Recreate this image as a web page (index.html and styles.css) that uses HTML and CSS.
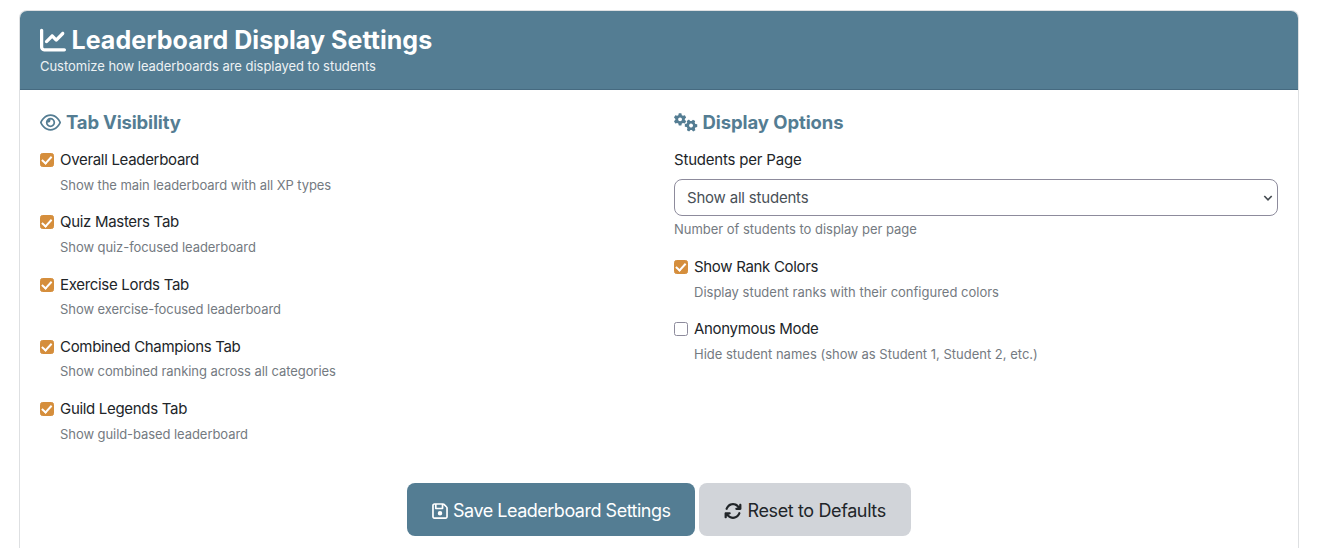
FILE: index.html
```html
<!DOCTYPE html>
<html lang="en">
<head>
<meta charset="utf-8">
<title>Leaderboard Display Settings</title>
<link rel="stylesheet" href="styles.css">
</head>
<body>
<section class="card">
  <header class="card-header">
    <h1 class="title"><svg class="icon-chart" viewBox="0 0 512 512"><path d="M64 64c0-17.7-14.3-32-32-32S0 46.3 0 64V400c0 44.2 35.8 80 80 80H480c17.7 0 32-14.3 32-32s-14.3-32-32-32H80c-8.8 0-16-7.2-16-16V64zm406.6 86.6c12.5-12.5 12.5-32.8 0-45.3s-32.8-12.5-45.3 0L320 210.7l-57.4-57.4c-12.5-12.5-32.8-12.5-45.3 0l-112 112c-12.5 12.5-12.5 32.8 0 45.3s32.8 12.5 45.3 0L240 221.3l57.4 57.4c12.5 12.5 32.8 12.5 45.3 0l128-128z"/></svg><span>Leaderboard Display Settings</span></h1>
    <p class="subtitle">Customize how leaderboards are displayed to students</p>
  </header>
  <div class="card-body">
    <div class="columns">
      <div class="column">
        <h2 class="heading heading-tabs"><svg class="icon-eye" viewBox="0 0 576 512"><path fill-rule="evenodd" d="M288 80c-65.2 0-118.8 29.6-159.9 67.7C89.6 183.5 63 226 49.4 256c13.6 30 40.2 72.5 78.6 108.3C169.2 402.4 222.8 432 288 432s118.8-29.6 159.9-67.7C486.4 328.5 513 286 526.6 256c-13.6-30-40.2-72.5-78.6-108.3C406.8 109.6 353.2 80 288 80zM95.4 112.6C142.5 68.8 207.2 32 288 32s145.5 36.8 192.6 80.6c46.8 43.5 78.1 95.4 93 131.1c3.3 7.9 3.3 16.7 0 24.6c-14.9 35.7-46.2 87.7-93 131.1C433.5 443.2 368.8 480 288 480s-145.5-36.8-192.6-80.6C48.6 356 17.3 304 2.5 268.3c-3.3-7.9-3.3-16.7 0-24.6C17.3 208 48.6 156 95.4 112.6zM288 336c44.2 0 80-35.8 80-80s-35.8-80-80-80c-.7 0-1.3 0-2 0c1.3 5.1 2 10.5 2 16c0 35.3-28.7 64-64 64c-5.5 0-10.9-.7-16-2c0 .7 0 1.3 0 2c0 44.2 35.8 80 80 80zm0-208a128 128 0 1 1 0 256 128 128 0 1 1 0-256z"/></svg><span>Tab Visibility</span></h2>
        <div class="option"><label class="check"><input type="checkbox" class="box" checked><span>Overall Leaderboard</span></label><p class="help">Show the main leaderboard with all XP types</p></div>
        <div class="option"><label class="check"><input type="checkbox" class="box" checked><span>Quiz Masters Tab</span></label><p class="help">Show quiz-focused leaderboard</p></div>
        <div class="option"><label class="check"><input type="checkbox" class="box" checked><span>Exercise Lords Tab</span></label><p class="help">Show exercise-focused leaderboard</p></div>
        <div class="option"><label class="check"><input type="checkbox" class="box" checked><span>Combined Champions Tab</span></label><p class="help">Show combined ranking across all categories</p></div>
        <div class="option"><label class="check"><input type="checkbox" class="box" checked><span>Guild Legends Tab</span></label><p class="help">Show guild-based leaderboard</p></div>
      </div>
      <div class="column">
        <h2 class="heading heading-gears"><svg class="icon-gears" viewBox="0 0 24 19"><defs><path id="gear" fill-rule="evenodd" d="M-1.3-6.2h2.6l.5 1.9 1.2.7 1.9-.6 1.3 2.3-1.4 1.4v1l1.4 1.4-1.3 2.3-1.9-.6-1.2.7-.5 1.9h-2.6l-.5-1.9-1.2-.7-1.9.6-1.3-2.3 1.4-1.4v-1l-1.4-1.4 1.3-2.3 1.9.6 1.2-.7zM0-2a2 2 0 1 0 0 4 2 2 0 0 0 0-4z"/></defs><use href="#gear" x="6.2" y="6.3"/><use href="#gear" transform="translate(17.4 12.6) rotate(30)"/></svg><span>Display Options</span></h2>
        <label class="select-label" for="per-page">Students per Page</label>
        <div class="select-wrap"><select id="per-page" class="select"><option>Show all students</option></select><svg class="chevron" viewBox="0 0 10 8"><path d="M1.3 2 5 5.9 8.7 2"/></svg></div>
        <p class="help select-help">Number of students to display per page</p>
        <div class="option"><label class="check"><input type="checkbox" class="box" checked><span>Show Rank Colors</span></label><p class="help help-wide">Display student ranks with their configured colors</p></div>
        <div class="option"><label class="check"><input type="checkbox" class="box"><span>Anonymous Mode</span></label><p class="help help-wide">Hide student names (show as Student 1, Student 2, etc.)</p></div>
      </div>
    </div>
    <div class="actions">
      <button class="btn btn-primary"><svg class="icon-save" viewBox="0 0 448 512"><path fill-rule="evenodd" d="M48 96V416c0 8.8 7.2 16 16 16H384c8.8 0 16-7.2 16-16V170.5c0-4.2-1.7-8.3-4.7-11.3l33.9-33.9c12 12 18.7 28.3 18.7 45.3V416c0 35.3-28.7 64-64 64H64c-35.3 0-64-28.7-64-64V96C0 60.7 28.7 32 64 32H309.5c17 0 33.3 6.7 45.3 18.7l74.5 74.5-33.9 33.9L320.8 84.7c-.3-.3-.5-.5-.8-.8V184c0 13.3-10.7 24-24 24H104c-13.3 0-24-10.7-24-24V80H64c-8.8 0-16 7.2-16 16zm80-16v80H272V80H128zm32 240a64 64 0 1 1 128 0 64 64 0 1 1-128 0z"/></svg><span>Save Leaderboard Settings</span></button>
      <button class="btn btn-secondary"><svg class="icon-sync" viewBox="0 0 512 512"><path d="M105.1 202.6c7.7-21.8 20.2-42.3 37.8-59.8c62.5-62.5 163.8-62.5 226.3 0L386.3 160H352c-17.7 0-32 14.3-32 32s14.3 32 32 32H463.9c17.7 0 32-14.3 32-32V80c0-17.7-14.3-32-32-32s-32 14.3-32 32v35.2L414.4 97.6c-87.5-87.5-229.3-87.5-316.8 0C73.2 122 55.6 150.7 44.8 181.4c-5.9 16.7 2.9 34.9 19.5 40.8s34.9-2.9 40.8-19.5z"/><path transform="rotate(180 256 256)" d="M105.1 202.6c7.7-21.8 20.2-42.3 37.8-59.8c62.5-62.5 163.8-62.5 226.3 0L386.3 160H352c-17.7 0-32 14.3-32 32s14.3 32 32 32H463.9c17.7 0 32-14.3 32-32V80c0-17.7-14.3-32-32-32s-32 14.3-32 32v35.2L414.4 97.6c-87.5-87.5-229.3-87.5-316.8 0C73.2 122 55.6 150.7 44.8 181.4c-5.9 16.7 2.9 34.9 19.5 40.8s34.9-2.9 40.8-19.5z"/></svg><span>Reset to Defaults</span></button>
    </div>
  </div>
</section>
</body>
</html>
```
FILE: styles.css
```css
*, *::before { box-sizing: border-box; }
html, body { height: 100%; }
body { margin: 0; padding: 10px 20px 0 19px; background: #fff; color: #212529; font: 15px/22px Inter, sans-serif; }
h1, h2, p { margin: 0; }
svg { display: block; flex: none; fill: currentColor; }
.card { height: 100%; border: 1px solid #dee0e2; border-bottom: 0; border-radius: 8px 8px 0 0; overflow: hidden; }
.card-header { height: 79px; padding: 13px 20px 0; background: #547d93; border-bottom: 1px solid #466a80; color: #fff; }
.title { display: flex; align-items: center; gap: 5.5px; font-size: 25px; line-height: 32px; font-weight: 700; letter-spacing: .05px; white-space: nowrap; }
.icon-chart { width: 26px; height: 26px; }
.subtitle { font-size: 13px; line-height: 20px; color: #edf2f4; letter-spacing: -.035px; }
.card-body { padding: 20px 20px 0; }
.columns { display: grid; grid-template-columns: 604px 604px; column-gap: 30px; height: 352px; }
.heading { display: flex; align-items: center; gap: 5px; height: 24px; margin-bottom: 15px; color: #547d93; font-size: 18.5px; line-height: 24px; font-weight: 700; letter-spacing: -.08px; }
.heading-tabs { letter-spacing: -.17px; }
.icon-eye { width: 21px; height: 19px; }
.icon-gears { width: 23.5px; height: 19px; }
.option { height: 62.25px; }
.check { display: flex; align-items: center; gap: 6px; height: 22px; letter-spacing: -.31px; }
.box { appearance: none; display: grid; place-items: center; width: 14px; height: 14px; margin: 0; border: 1px solid #8d8b9c; border-radius: 2.5px; background: #fff; }
.box:checked { border-color: #d58e3c; background: #d58e3c; }
.box:checked::before { content: ""; width: 5.5px; height: 9.5px; margin-top: -2px; border: solid #fff; border-width: 0 2px 2px 0; transform: rotate(42deg); }
.help { color: #747a81; font-size: 13px; line-height: 20px; letter-spacing: -.07px; }
.option .help { margin: 3.6px 0 0 20px; }
.option .help-wide { margin-top: 4px; letter-spacing: 0; }
.select-label { display: block; height: 22px; letter-spacing: -.2px; }
.select-wrap { position: relative; margin-top: 8px; }
.select { appearance: none; display: block; width: 604px; height: 37px; padding: 0 12px; border: 1px solid #8d8b9c; border-radius: 8px; background: #fff; color: #495057; font: 15px Inter, sans-serif; letter-spacing: -.2px; }
.chevron { position: absolute; right: 5px; top: 15px; width: 10px; height: 8px; fill: none; stroke: #444a50; stroke-width: 1.6; }
.select-help { margin: 3px 0 17px; letter-spacing: -.02px; }
.actions { display: flex; justify-content: center; gap: 4px; margin-top: 21px; }
.btn { display: flex; align-items: center; height: 53px; padding: 2px 24px 0 25px; border: 0; border-radius: 8px; font: 18px Inter, sans-serif; white-space: nowrap; }
.btn-primary { width: 288px; gap: 5px; background: #547d93; color: #fff; letter-spacing: -.49px; }
.btn-secondary { width: 212px; gap: 5.5px; background: #d1d4d9; color: #212529; letter-spacing: -.38px; }
.icon-save { width: 16px; height: 18px; }
.icon-sync { width: 18px; height: 18px; }
```
